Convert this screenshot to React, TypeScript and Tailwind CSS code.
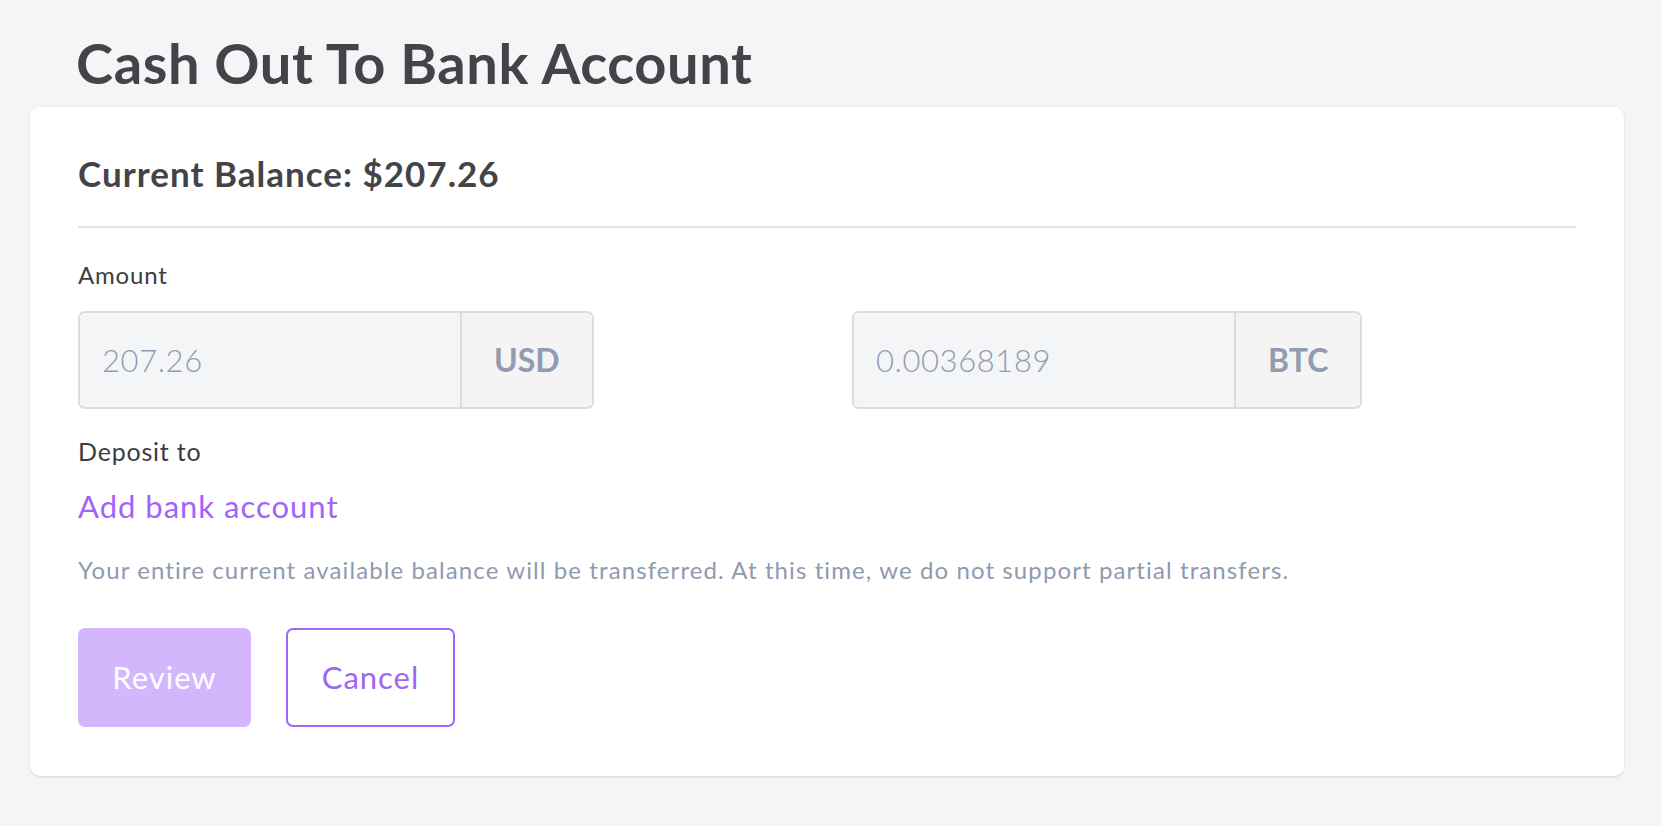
import React from "react";

const AmountField = ({ value, unit }: { value: string; unit: string }) => (
  <div className="flex h-[98px] w-fit rounded-[7px] border-2 border-[#dbdcde] overflow-hidden">
    <input
      readOnly
      value={value}
      className="w-[380px] bg-[#f4f5f7] pl-[22px] text-[31px] font-light tracking-[0.6px] text-[#929cb0] outline-none"
    />
    <div className="flex items-center border-l-2 border-[#dbdcde] bg-[#f4f4f5] px-[32px] text-[32px] font-bold text-[#929cb0]">
      {unit}
    </div>
  </div>
);

const App = () => {
  return (
    <div className="min-h-screen bg-[#f4f5f7] pl-[30px] pr-[38px] pb-[50px] font-['Lato',sans-serif]">
      <h1 className="pl-[46px] pt-[35px] mb-[16px] text-[56px] leading-none font-bold tracking-[0.6px] text-[#434448]">
        Cash Out To Bank Account
      </h1>

      <div className="rounded-[10px] bg-white px-[48px] pt-[49px] pb-[49px] shadow-[0_1px_3px_rgba(0,0,0,0.12)]">
        <h2 className="text-[35px] leading-none font-bold tracking-[1px] text-[#434448]">
          Current Balance: $207.26
        </h2>
        <div className="mt-[35px] h-[2px] bg-[#dfe4ec]" />

        <p className="mt-[35px] text-[24px] leading-none tracking-[0.8px] text-[#3c3d42]">Amount</p>
        <div className="mt-[24px] grid grid-cols-2 gap-[50px]">
          <AmountField value="207.26" unit="USD" />
          <AmountField value="0.00368189" unit="BTC" />
        </div>

        <p className="mt-[30px] text-[25px] leading-none tracking-[0.8px] text-[#3c3d42]">Deposit to</p>
        <a
          href="#"
          className="mt-[27px] block w-fit text-[31px] leading-none tracking-[1px] text-[#a164f7]"
        >
          Add bank account
        </a>
        <p className="mt-[36px] text-[24px] leading-none tracking-[1.1px] text-[#8f9ab0]">
          Your entire current available balance will be transferred. At this time, we do not
          support partial transfers.
        </p>

        <div className="mt-[46px] flex gap-[35px]">
          <button className="h-[99px] w-[173px] rounded-[7px] bg-[#d4b6fd] text-[31px] tracking-[1px] text-white">
            Review
          </button>
          <button className="h-[99px] w-[169px] rounded-[7px] border-2 border-[#a066f5] bg-white text-[31px] tracking-[1px] text-[#a066f5]">
            Cancel
          </button>
        </div>
      </div>
    </div>
  );
};

export default App;
